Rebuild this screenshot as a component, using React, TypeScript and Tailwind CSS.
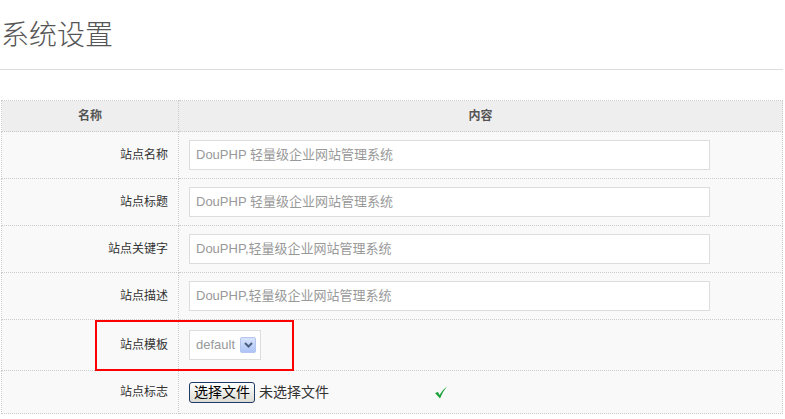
import React from 'react';

const FONT = { fontFamily: '"Liberation Sans", "Noto Sans CJK SC", sans-serif' };

const textRows = [
  { label: '站点名称', value: 'DouPHP 轻量级企业网站管理系统' },
  { label: '站点标题', value: 'DouPHP 轻量级企业网站管理系统' },
  { label: '站点关键字', value: 'DouPHP,轻量级企业网站管理系统' },
  { label: '站点描述', value: 'DouPHP,轻量级企业网站管理系统' },
];

function TextInput({ value }: { value: string }) {
  return (
    <div className="w-[521px] h-[30px] border border-[#dddddd] bg-white flex items-center pl-[6px] text-[13px] text-[#999999]">
      {value}
    </div>
  );
}

function SelectBox() {
  return (
    <div className="w-[72px] h-[30px] border border-[#dddddd] bg-white flex items-center pl-[6px] gap-[5px]">
      <span className="text-[13px] text-[#999999]">default</span>
      <span className="w-[16px] h-[16px] rounded-[2px] border border-[#b4c6f0] bg-gradient-to-b from-[#d8e4fc] to-[#aec4f6] flex items-center justify-center">
        <svg width="9" height="6" viewBox="0 0 9 6">
          <path d="M1 1 L4.5 4.5 L8 1" stroke="#4d6185" strokeWidth="2" fill="none" />
        </svg>
      </span>
    </div>
  );
}

export default function App() {
  const cellLabel =
    'border border-dotted border-[#cccccc] text-right pr-[10px] text-[12px] text-[#333333] w-[177px]';
  const cellValue = 'border border-dotted border-[#cccccc] pl-[10px]';

  return (
    <div className="w-[783px] bg-white relative" style={FONT}>
      <div className="h-[70px] border-b border-[#dddddd] pt-[16px]">
        <h1 className="text-[28px] leading-[40px] font-light text-[#555555] pl-[1px]">系统设置</h1>
      </div>

      <table className="mt-[30px] ml-[1px] w-[782px] border-collapse">
        <thead>
          <tr className="h-[31px] bg-[#eeeeee]">
            <th className="border border-dotted border-[#cccccc] w-[177px] text-[12px] font-bold text-[#555555]">名称</th>
            <th className="border border-dotted border-[#cccccc] text-[12px] font-bold text-[#555555]">内容</th>
          </tr>
        </thead>
        <tbody className="bg-[#f9f9f9]">
          {textRows.map((r) => (
            <tr key={r.label} className="h-[47px]">
              <td className={cellLabel}>{r.label}</td>
              <td className={cellValue}>
                <TextInput value={r.value} />
              </td>
            </tr>
          ))}
          <tr className="h-[51px]">
            <td className={cellLabel}>站点模板</td>
            <td className={cellValue}>
              <SelectBox />
            </td>
          </tr>
          <tr className="h-[43px]">
            <td className={cellLabel}>站点标志</td>
            <td className={cellValue}>
              <div className="flex items-center">
                <button className="h-[21px] px-[4px] rounded-[3px] border border-[#1f3a64] bg-gradient-to-b from-[#ffffff] to-[#dcdcd4] text-[14px] text-black leading-none">
                  选择文件
                </button>
                <span className="ml-[4px] text-[14px] text-[#333333]">未选择文件</span>
                <svg className="ml-[105px]" width="14" height="13" viewBox="0 0 14 13">
                  <path d="M1 7 L4 6 L5.5 9 Q8 4 13 0.5 Q9 5 6 12.5 Z" fill="#1aa33a" />
                </svg>
              </div>
            </td>
          </tr>
        </tbody>
      </table>

      <div className="absolute left-[95px] top-[320px] w-[199px] h-[51px] border-2 border-[#ff0000] pointer-events-none" />
    </div>
  );
}
